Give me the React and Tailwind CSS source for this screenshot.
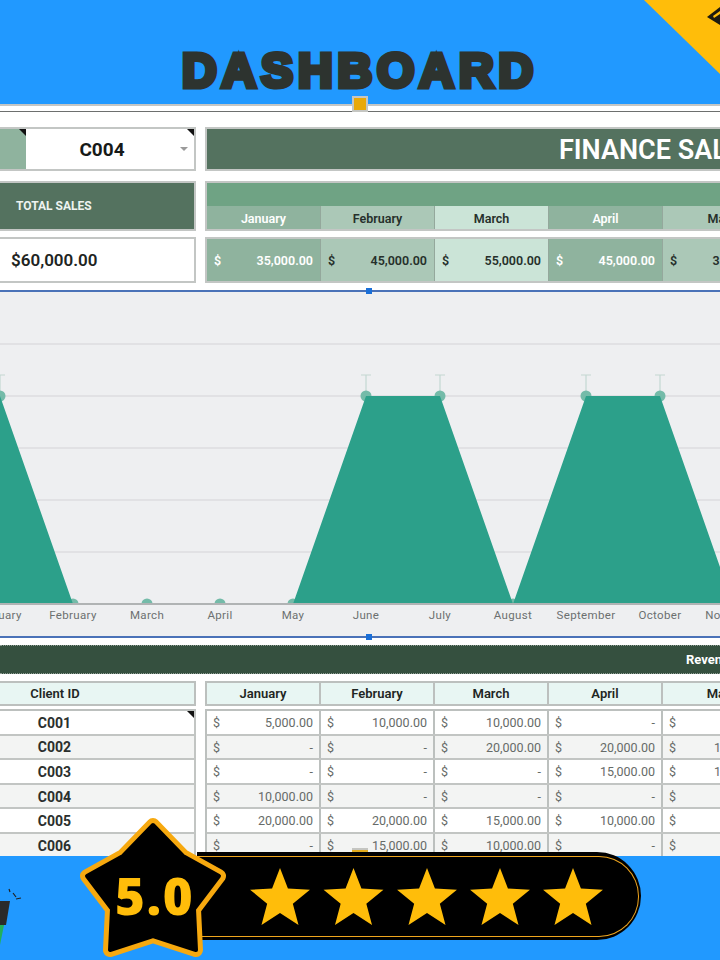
const MONTHS = ["January", "February", "March", "April", "May", "June"];
const SUMMARY = [
  { m: "January", v: "35,000.00", bg: "bg-[#8fb39e]", fg: "text-white" },
  { m: "February", v: "45,000.00", bg: "bg-[#abc8b7]", fg: "text-[#26302b]" },
  { m: "March", v: "55,000.00", bg: "bg-[#cbe4d7]", fg: "text-[#26302b]" },
  { m: "April", v: "45,000.00", bg: "bg-[#8fb39e]", fg: "text-white" },
  { m: "May", v: "35,000.00", bg: "bg-[#abc8b7]", fg: "text-[#26302b]" },
];
const ROWS = [
  ["C001", "5,000.00", "10,000.00", "10,000.00", "-", "-"],
  ["C002", "-", "-", "20,000.00", "20,000.00", "15,000.00"],
  ["C003", "-", "-", "-", "15,000.00", "15,000.00"],
  ["C004", "10,000.00", "-", "-", "-", "-"],
  ["C005", "20,000.00", "20,000.00", "15,000.00", "10,000.00", "-"],
  ["C006", "-", "15,000.00", "10,000.00", "-", "-"],
];
const AXIS = ["January", "February", "March", "April", "May", "June", "July", "August", "September", "October", "November"];

function Corner() {
  return <span className="absolute right-0 top-0 h-0 w-0 border-l-[7px] border-t-[7px] border-l-transparent border-t-[#111]" />;
}

function Chart() {
  const pts = [0, 73, 147, 220, 293, 366, 440, 513, 586, 660, 733];
  const hi = [0, 5, 6, 8, 9];
  const vals = pts.map((x, i) => [x, hi.includes(i) ? 104 : 312]);
  const d = `M0 312 ${vals.map(([x, y]) => `L${x} ${y}`).join(" ")} L733 312Z`;
  return (
    <svg width="720" height="344" viewBox="0 0 720 344" className="block">
      <defs>
        <clipPath id="plot"><rect x="-10" y="0" width="760" height="311" /></clipPath>
      </defs>
      {[52, 104, 156, 208, 260].map((y) => (
        <line key={y} x1="0" x2="720" y1={y} y2={y} stroke="#dcdddf" strokeWidth="1.5" />
      ))}
      <g clipPath="url(#plot)">
        {vals.map(([x, y]) => (
          <g key={x}>
            {y === 104 && (
              <path d="M-5 -21H5M0 -21V0" transform={`translate(${x} ${y})`} stroke="#c4d8d2" strokeWidth="1.2" fill="none" />
            )}
            <circle cx={x} cy={y} r="5.5" fill="#74bba9" />
          </g>
        ))}
        <path d={d} fill="#2ca08a" />
      </g>
      <line x1="0" x2="720" y1="312" y2="312" stroke="#9b9f9f" strokeWidth="1.5" />
      {AXIS.map((m, i) => (
        <text key={m} x={pts[i]} y="327" textAnchor="middle" fontSize="11.5" letterSpacing="0.35" fill="#6c7070" fontFamily="Roboto, sans-serif">
          {m}
        </text>
      ))}
    </svg>
  );
}

function RatingStar({ cx }) {
  const cy = 899.5;
  const pts = [];
  for (let i = 0; i < 10; i++) {
    const r = i % 2 === 0 ? 31.5 : 13.5;
    const a = -Math.PI / 2 + (i * Math.PI) / 5;
    pts.push(`${cx + r * Math.cos(a)},${cy + r * Math.sin(a)}`);
  }
  return <polygon points={pts.join(" ")} fill="#ffbd0a" />;
}

const BIG_STAR = "75,11 105,42 141,62 116,95 118,136 75,122 32,136 34,95 9,62 45,42";

export default function App() {
  return (
    <div className="relative h-[960px] w-[720px] overflow-hidden bg-[#2199ff] font-['Roboto',sans-serif]">
      <header className="flex h-[104px] items-start justify-center pt-[49px]">
        <h1 className="font-['Liberation_Sans',sans-serif] text-[48px] font-bold leading-[44px] tracking-[4.9px] text-[#2d332f] [-webkit-text-stroke:5px_#2d332f] [text-shadow:1.5px_0_1px_#d81fd0,-1.5px_0_1px_#22e0e8]">
          DASHBOARD
        </h1>
      </header>

      <main className="relative h-[752px] overflow-hidden bg-white">
        <div className="h-[8px] border-b border-t-2 border-[#6d6f6e] border-t-[#c4c6c5]" />
        <div className="flex gap-[9px] pt-[15px]">
          <div className="flex h-[44px] w-[196px] shrink-0 border-2 border-l-0 border-[#c3c6c4]">
            <div className="relative w-[26px] bg-[#8fb39e]"><Corner /></div>
            <div className="relative flex flex-1 items-center justify-center bg-white pr-[16px] pt-[2px] text-[19px] font-bold text-[#161a18]">
              <Corner />
              C004
              <span className="absolute right-[6px] top-[18px] h-0 w-0 border-x-[4px] border-t-[4px] border-x-transparent border-t-[#9a9a9a]" />
            </div>
          </div>
          <div className="flex h-[44px] min-w-0 flex-1 items-center overflow-hidden border-2 border-r-0 border-[#c3c6c4] bg-[#54725f] pl-[352px] pt-[2px]">
            <span className="whitespace-nowrap text-[27px] font-semibold text-white">FINANCE SALES</span>
          </div>
        </div>

        <div className="flex gap-[9px] pt-[10px]">
          <div className="flex h-[50px] w-[196px] shrink-0 items-center border-2 border-l-0 border-[#c3c6c4] bg-[#54725f] pb-[1px] pl-[16px] text-[12px] font-bold text-[#eef3f0]">
            TOTAL SALES
          </div>
          <div className="min-w-0 flex-1 overflow-hidden">
            <div className="h-[50px] w-[800px] border-2 border-[#c3c6c4]">
              <div className="h-[23px] bg-[#6fa384]" />
              <div className="flex h-[23px]">
                {SUMMARY.map((s) => (
                  <div key={s.m} className={`flex w-[114px] shrink-0 items-center justify-center border-r border-[#94a89c] pt-[3px] text-[12.5px] font-semibold ${s.bg} ${s.fg}`}>
                    {s.m}
                  </div>
                ))}
              </div>
            </div>
          </div>
        </div>

        <div className="flex gap-[9px] pt-[6px]">
          <div className="flex h-[46px] w-[196px] shrink-0 items-center border-2 border-l-0 border-[#c3c6c4] pl-[11px] pt-[2px] text-[17px] font-semibold text-[#1e2422]">
            $60,000.00
          </div>
          <div className="min-w-0 flex-1 overflow-hidden">
            <div className="flex h-[46px] w-[800px] border-2 border-[#c3c6c4]">
              {SUMMARY.map((s) => (
                <div key={s.m} className={`flex w-[114px] shrink-0 items-center justify-between border-r border-[#94a89c] px-[7px] pt-[2px] text-[12.5px] font-semibold ${s.bg} ${s.fg}`}>
                  <span>$</span>
                  <span>{s.v}</span>
                </div>
              ))}
            </div>
          </div>
        </div>

        <div className="mt-[7px] h-[2px] bg-[#4a72b8]" />
        <div className="bg-[#eeeff1]">
          <Chart />
        </div>

        <div className="h-[2px] bg-[#4a72b8]" />
        <div className="mt-[7px] flex h-[29px] items-center overflow-hidden border-y border-dotted border-[#8e9c93] bg-[#35503f] pl-[686px]">
          <span className="whitespace-nowrap text-[13px] font-bold text-white">Revenue</span>
        </div>

        <div className="flex gap-[9px] pt-[7px]">
          <div className="w-[196px] shrink-0">
            <div className="flex h-[25px] items-center justify-center border-2 border-l-0 border-[#bcc0be] bg-[#e8f6f3] pr-[84px] text-[13px] font-semibold text-[#1f2623]">
              Client ID
            </div>
            <div className="mt-[3px] border-t-2 border-[#bcc0be]">
              {ROWS.map((r, i) => (
                <div key={r[0]} className={`relative flex h-[24.6px] items-center justify-center border-b-2 border-r-2 border-[#c2c5c3] pr-[85px] pt-[2px] text-[14px] font-bold text-[#2a2f2d] ${i % 2 ? "bg-[#f3f4f3]" : "bg-white"}`}>
                  {i === 0 && <Corner />}
                  {r[0]}
                </div>
              ))}
            </div>
          </div>
          <div className="min-w-0 flex-1 overflow-hidden">
            <div className="flex h-[25px] w-[800px] border-y-2 border-l-2 border-[#bcc0be] bg-[#e8f6f3]">
              {MONTHS.map((m) => (
                <div key={m} className="flex w-[114px] shrink-0 items-center justify-center border-r-2 border-[#bcc0be] text-[13px] font-semibold text-[#1f2623]">
                  {m}
                </div>
              ))}
            </div>
            <div className="mt-[3px] w-[800px] border-l-2 border-t-2 border-[#bcc0be]">
              {ROWS.map((r, i) => (
                <div key={r[0]} className={`flex h-[24.6px] border-b-2 border-[#c2c5c3] ${i % 2 ? "bg-[#f3f4f3]" : "bg-white"}`}>
                  {r.slice(1).map((v, j) => (
                    <div key={j} className="flex w-[114px] shrink-0 items-center justify-between border-r-2 border-[#bcc0be] px-[6px] pt-[2px] text-[12.5px] text-[#666b68]">
                      <span>$</span>
                      <span>{v}</span>
                    </div>
                  ))}
                </div>
              ))}
            </div>
          </div>
        </div>
      </main>

      <div className="absolute left-[352px] top-[96px] h-[16px] w-[16px] border-2 border-[#c5c6c2] bg-[#e9a908]" />
      <div className="absolute left-[366px] top-[288px] h-[6px] w-[6px] bg-[#1a6fd8]" />
      <div className="absolute left-[366px] top-[634px] h-[6px] w-[6px] bg-[#1a6fd8]" />
      <div className="absolute left-[352px] top-[848px] h-[6px] w-[16px] border-t-2 border-[#c5c6c2] bg-[#e3ab1e]" />

      <svg className="absolute right-0 top-0" width="76" height="76" viewBox="0 0 76 76">
        <polygon points="0,0 76,0 76,74" fill="#ffbd0a" />
        <path d="M63 17 L76 7 V25 Z" fill="#1d1a10" />
        <path d="M69 16 L76 11 V14 L70 18 Z" fill="#ffbd0a" />
      </svg>

      <svg className="absolute bottom-0 left-0" width="24" height="80" viewBox="0 0 24 80">
        <polygon points="0,21 10,21 6,45 0,45" fill="#2a2a2a" />
        <polygon points="0,45 4,45 0,65" fill="#23b05a" />
        <path d="M9 9l1 3M13 13l3 4M16 19l5-1" stroke="#222" strokeWidth="1.2" fill="none" />
      </svg>

      <div className="absolute left-[197px] top-[852px] flex h-[88px] w-[444px] items-stretch rounded-r-[44px] bg-black pb-[3px] pr-[2px] pt-[4px]">
        <div className="w-full rounded-r-[40px] border-[1.5px] border-l-0 border-[#f0a61e]" />
      </div>

      <svg className="absolute left-0 top-[800px]" width="720" height="160" viewBox="0 800 720 160">
        {[280, 353.5, 427, 500, 573].map((x) => <RatingStar key={x} cx={x} />)}
      </svg>

      <svg className="absolute left-[78px] top-[814px]" width="152" height="146" viewBox="0 0 152 146">
        <polygon points={BIG_STAR} fill="#f7a90f" stroke="#f7a90f" strokeWidth="14" strokeLinejoin="round" />
        <polygon points={BIG_STAR} fill="#000" stroke="#000" strokeWidth="4" strokeLinejoin="round" />
      </svg>
      <div className="absolute left-[115px] top-[868px] font-['Open_Sans',sans-serif] text-[51px] font-extrabold leading-[54px] tracking-[1.5px] text-[#ffbd0a]">
        5.0
      </div>
    </div>
  );
}
